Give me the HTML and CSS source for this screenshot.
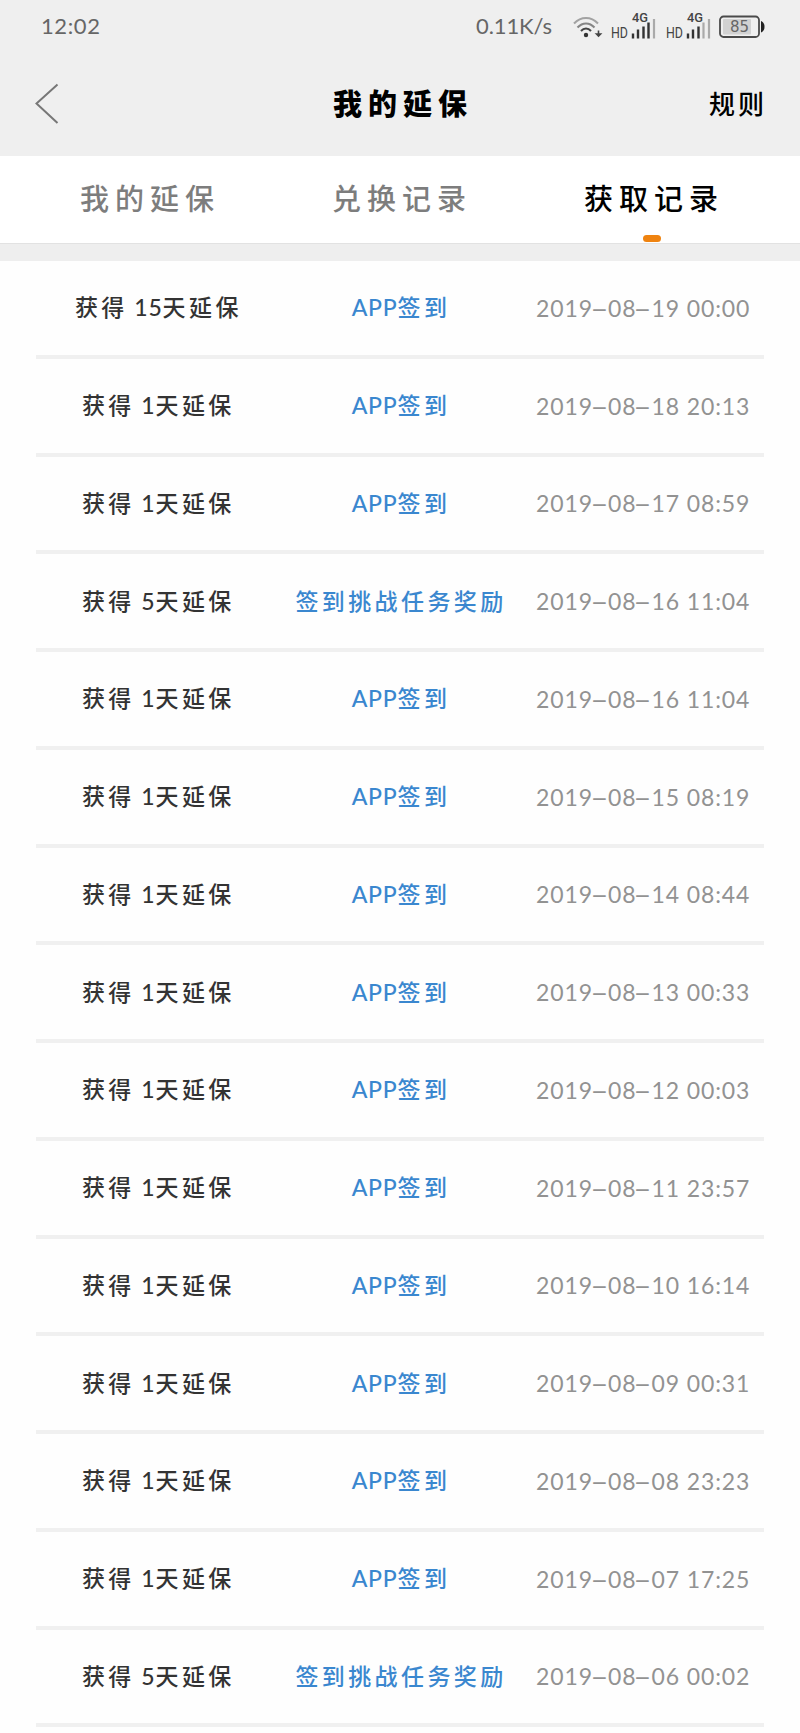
FILE: index.html
```html
<!DOCTYPE html>
<html lang="zh-CN">
<head>
    <meta charset="UTF-8">
    <meta name="viewport" content="width=device-width, initial-scale=1.0">
    <title>我的延保</title>
    <link rel="stylesheet" href="styles.css">
</head>
<body>
    <div class="status-bar">
        <span class="time">12:02</span>
        <span class="speed">0.11K/s</span>
        <svg class="wifi" width="30" height="24" viewBox="0 0 30 24" fill="none">
            <path d="M1 7.500C8 0 18 0 25 7.500" stroke="#a2a2a2" stroke-width="2"/>
            <path d="M4.500 11.500C9.500 6 16.500 6 21.500 11.500" stroke="#858585" stroke-width="2"/>
            <path d="M8 15C11 11.500 15 11.500 18 15" stroke="#444" stroke-width="2"/>
            <circle cx="13" cy="19" r="2.200" fill="#333"/>
            <path d="M25.500 14.500v4M23.500 18l2 2 2-2z" stroke="#444" stroke-width="1.600" fill="#444"/>
        </svg>
        <svg class="signal" width="46" height="36" viewBox="0 -1 46 36">
            <text x="0" y="28" class="hd" textLength="17" lengthAdjust="spacingAndGlyphs">HD</text>
            <text x="21" y="12" class="net" textLength="16" lengthAdjust="spacingAndGlyphs">4G</text>
            <path d="M22 28.500v-5M27 28.500v-9M32.500 28.500v-12M37.500 28.500v-16" stroke="#333" stroke-width="2.400"/>
            <path d="M43 28.500V9" stroke="#aaa" stroke-width="2.200"/>
        </svg>
        <svg class="signal" width="46" height="36" viewBox="0 -1 46 36">
            <text x="0" y="28" class="hd" textLength="17" lengthAdjust="spacingAndGlyphs">HD</text>
            <text x="21" y="12" class="net" textLength="16" lengthAdjust="spacingAndGlyphs">4G</text>
            <path d="M22 28.500v-5M27 28.500v-9M32.500 28.500v-12" stroke="#333" stroke-width="2.400"/>
            <path d="M37.500 28.500v-16M43 28.500V9" stroke="#aaa" stroke-width="2.200"/>
        </svg>
        <svg class="battery" width="48" height="24" viewBox="0 0 48 24">
            <rect x="1" y="1.500" width="39" height="20.500" rx="3.500" fill="#efefef" stroke="#4a4a4a" stroke-width="1.800"/>
            <rect x="4" y="4" width="28" height="15.500" rx="1" fill="#d2d2d2"/>
            <path d="M42 6c2.500 1 3.500 3 3.500 5.700s-1 4.800-3.500 5.800z" fill="#222"/>
            <text x="11" y="17.300" class="level" textLength="19">85</text>
        </svg>
    </div>

    <div class="header">
        <svg class="back" width="24" height="42" viewBox="0 0 24 42" fill="none">
            <path d="M22.500 1.500L1.500 20.500L22.500 40" stroke="#777" stroke-width="2"/>
        </svg>
        <h1 class="title">我的延保</h1>
        <span class="rule">规则</span>
    </div>

    <div class="tabs">
        <div class="tab">我的延保</div>
        <div class="tab">兑换记录</div>
        <div class="tab active">获取记录</div>
    </div>

    <div class="list">
        <div class="row">
            <span class="days">获得<em> 15</em>天延保</span>
            <span class="source"><em>APP</em>签到</span>
            <span class="date">2019<i>-</i>08<i>-</i>19 00:00</span>
        </div>
        <div class="row">
            <span class="days">获得<em> 1</em>天延保</span>
            <span class="source"><em>APP</em>签到</span>
            <span class="date">2019<i>-</i>08<i>-</i>18 20:13</span>
        </div>
        <div class="row">
            <span class="days">获得<em> 1</em>天延保</span>
            <span class="source"><em>APP</em>签到</span>
            <span class="date">2019<i>-</i>08<i>-</i>17 08:59</span>
        </div>
        <div class="row">
            <span class="days">获得<em> 5</em>天延保</span>
            <span class="source">签到挑战任务奖励</span>
            <span class="date">2019<i>-</i>08<i>-</i>16 11:04</span>
        </div>
        <div class="row">
            <span class="days">获得<em> 1</em>天延保</span>
            <span class="source"><em>APP</em>签到</span>
            <span class="date">2019<i>-</i>08<i>-</i>16 11:04</span>
        </div>
        <div class="row">
            <span class="days">获得<em> 1</em>天延保</span>
            <span class="source"><em>APP</em>签到</span>
            <span class="date">2019<i>-</i>08<i>-</i>15 08:19</span>
        </div>
        <div class="row">
            <span class="days">获得<em> 1</em>天延保</span>
            <span class="source"><em>APP</em>签到</span>
            <span class="date">2019<i>-</i>08<i>-</i>14 08:44</span>
        </div>
        <div class="row">
            <span class="days">获得<em> 1</em>天延保</span>
            <span class="source"><em>APP</em>签到</span>
            <span class="date">2019<i>-</i>08<i>-</i>13 00:33</span>
        </div>
        <div class="row">
            <span class="days">获得<em> 1</em>天延保</span>
            <span class="source"><em>APP</em>签到</span>
            <span class="date">2019<i>-</i>08<i>-</i>12 00:03</span>
        </div>
        <div class="row">
            <span class="days">获得<em> 1</em>天延保</span>
            <span class="source"><em>APP</em>签到</span>
            <span class="date">2019<i>-</i>08<i>-</i>11 23:57</span>
        </div>
        <div class="row">
            <span class="days">获得<em> 1</em>天延保</span>
            <span class="source"><em>APP</em>签到</span>
            <span class="date">2019<i>-</i>08<i>-</i>10 16:14</span>
        </div>
        <div class="row">
            <span class="days">获得<em> 1</em>天延保</span>
            <span class="source"><em>APP</em>签到</span>
            <span class="date">2019<i>-</i>08<i>-</i>09 00:31</span>
        </div>
        <div class="row">
            <span class="days">获得<em> 1</em>天延保</span>
            <span class="source"><em>APP</em>签到</span>
            <span class="date">2019<i>-</i>08<i>-</i>08 23:23</span>
        </div>
        <div class="row">
            <span class="days">获得<em> 1</em>天延保</span>
            <span class="source"><em>APP</em>签到</span>
            <span class="date">2019<i>-</i>08<i>-</i>07 17:25</span>
        </div>
        <div class="row">
            <span class="days">获得<em> 5</em>天延保</span>
            <span class="source">签到挑战任务奖励</span>
            <span class="date">2019<i>-</i>08<i>-</i>06 00:02</span>
        </div>
    </div>
</body>
</html>
```

FILE: styles.css
```css
* {
    box-sizing: border-box;
}

body {
    margin: 0;
    height: 1733px;
    overflow: hidden;
    background-color: #fefefe;
    font-family: Lato, "Noto Sans CJK SC", sans-serif;
}

/* status bar */
.status-bar {
    display: flex;
    align-items: center;
    height: 52px;
    padding: 0 33px 2px 41px;
    background-color: #efefef;
    color: #666;
    font-size: 22px;
}

.time {
    letter-spacing: 0.6px;
}

.speed {
    margin-left: auto;
    letter-spacing: -0.1px;
}

.wifi {
    margin: 5px 0 0 21px;
}

.signal {
    margin: 4px 0 0 8px;
}

.signal + .signal {
    margin-left: 9px;
}

.battery {
    margin: 3px 0 0 7px;
}

.hd {
    font: 15px Roboto, sans-serif;
    fill: #444;
}

.net {
    font: 500 13px Roboto, sans-serif;
    fill: #444;
}

.level {
    font: 15px "DejaVu Sans", sans-serif;
    fill: #666;
}

/* header */
.header {
    display: grid;
    grid-template-columns: 1fr auto 1fr;
    align-items: center;
    height: 104px;
    padding: 0 33px 0 35px;
    background-color: #efefef;
    color: #000;
}

.title {
    margin: 0;
    padding-bottom: 4px;
    font-size: 29px;
    font-weight: 900;
    letter-spacing: 6px;
    text-indent: 4px;
}

.rule {
    justify-self: end;
    padding-bottom: 4px;
    font-size: 26px;
    font-weight: 500;
    letter-spacing: 3px;
}

/* tabs */
.tabs {
    display: flex;
    height: 88px;
    padding: 0 22px;
    border-bottom: 1px solid #e2e2e2;
    background-color: #fff;
}

.tab {
    position: relative;
    flex: 1;
    line-height: 86px;
    text-align: center;
    font-size: 29px;
    font-weight: 500;
    letter-spacing: 6px;
    text-indent: 4px;
    color: #7d7d7d;
}

.active {
    color: #000;
}

.active::after {
    content: "";
    position: absolute;
    left: 50%;
    bottom: 1px;
    width: 18px;
    height: 7px;
    margin-left: -9px;
    border-radius: 4px;
    background-color: #ef8310;
}

/* records */
.list {
    padding: 0 36px;
    border-top: 17px solid #eee;
}

.row {
    display: grid;
    grid-template-columns: repeat(3, 1fr);
    align-items: center;
    height: 97.75px;
    border-bottom: 4px solid #f0f0f0;
    font-size: 23px;
    text-align: center;
    white-space: nowrap;
}

.days,
.source {
    padding: 0 0 3px 2px;
    letter-spacing: 3.4px;
    font-weight: 500;
}

.days {
    color: #333;
}

.source {
    color: #3a87cf;
}

.row em {
    font-style: normal;
    letter-spacing: 0.8px;
}

.date {
    padding-left: 1px;
    letter-spacing: 0.9px;
    color: #929292;
}

.date i {
    display: inline-block;
    width: 15px;
    font-style: normal;
    transform: scaleX(2.2);
}
```
